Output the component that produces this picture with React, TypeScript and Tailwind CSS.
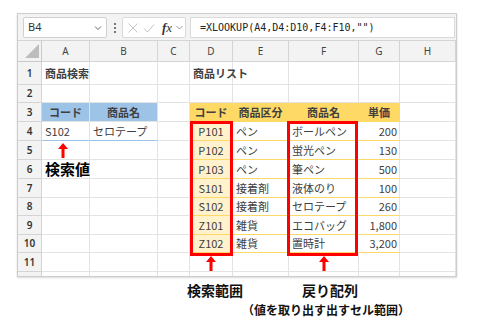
import React from 'react';

const jp = { fontFamily: '"Noto Sans CJK JP", "Noto Sans", sans-serif' };

const cols = ['A', 'B', 'C', 'D', 'E', 'F', 'G', 'H'];

const list = [
  ['P101', 'ペン', 'ボールペン', '200'],
  ['P102', 'ペン', '蛍光ペン', '130'],
  ['P103', 'ペン', '筆ペン', '500'],
  ['S101', '接着剤', '液体のり', '100'],
  ['S102', '接着剤', 'セロテープ', '260'],
  ['Z101', '雑貨', 'エコバッグ', '1,800'],
  ['Z102', '雑貨', '置時計', '3,200'],
];

function UpArrow() {
  return (
    <svg width="10" height="15" viewBox="0 0 10 15">
      <path d="M5 0 L10 6 L6.5 6 L6.5 15 L3.5 15 L3.5 6 L0 6 Z" fill="#ff0000" />
    </svg>
  );
}

type Cell = { text?: React.ReactNode; cls?: string };

function cellFor(row: number, col: number): Cell {
  // col: 0=A .. 7=H
  if (row === 1) {
    if (col === 0) return { text: '商品検索', cls: 'font-bold' };
    if (col === 3) return { text: '商品リスト', cls: 'font-bold' };
  }
  if (row === 3) {
    if (col === 0) return { text: 'コード', cls: 'bg-[#9dc3e6] border-[#9dc3e6] font-bold justify-center' };
    if (col === 1) return { text: '商品名', cls: 'bg-[#9dc3e6] border-[#9dc3e6] font-bold justify-center' };
    const h = ['コード', '商品区分', '商品名', '単価'];
    if (col >= 3 && col <= 6)
      return { text: h[col - 3], cls: 'bg-[#ffd966] border-[#ffd966] font-bold justify-center' };
  }
  if (row === 4 && col === 0) return { text: 'S102', cls: 'border-b-[#9dc3e6]' };
  if (row === 4 && col === 1) return { text: 'セロテープ', cls: 'border-b-[#9dc3e6]' };
  if (row === 5 && col === 0) return { text: <UpArrow />, cls: 'pl-[16px] items-start pt-[2px]' };
  if (row === 6 && col === 0) return { text: '検索値', cls: 'font-bold text-[15px] text-black' };
  if (row >= 4 && row <= 10 && col >= 3 && col <= 6) {
    const v = list[row - 4][col - 3];
    const base = 'border-b-[#ffd966]';
    if (col === 3) return { text: v, cls: `${base} bg-[#fff2cc] border-r-[#ffe699] justify-center` };
    if (col === 6) return { text: v, cls: `${base} justify-end pr-[2px]` };
    return { text: v, cls: `${base} border-r-white` };
  }
  if (row === 11 && (col === 3 || col === 5))
    return { text: <UpArrow />, cls: 'justify-center items-end pb-0' };
  return {};
}

function Grid() {
  const rows = Array.from({ length: 11 }, (_, i) => i + 1);
  return (
    <div className="relative grid grid-cols-[24px_48px_68px_32px_43px_56px_70px_41px_56px] grid-rows-[21px_23px_18px_19px_19px_19px_19px_19px_18px_19px_18px_19px_4px] bg-white">
      <div className="bg-[#f3f3f3] border-r border-b border-[#c9c9c9] relative">
        <div className="absolute right-[2px] bottom-[3px] w-0 h-0 border-l-[14px] border-l-transparent border-b-[14px] border-b-[#bdbdbd]" />
      </div>
      {cols.map((c) => (
        <div
          key={c}
          className="bg-[#f3f3f3] border-r border-b border-[#d4d4d4] flex items-center justify-center text-[10px] text-[#444]"
          style={{ fontFamily: '"Noto Sans", sans-serif' }}
        >
          {c}
        </div>
      ))}
      {rows.map((r) => (
        <React.Fragment key={r}>
          <div
            className="bg-[#f3f3f3] border-r border-b border-[#d4d4d4] flex items-center justify-center text-[10px] font-semibold text-[#333]"
            style={{ fontFamily: '"Noto Sans", sans-serif' }}
          >
            {r}
          </div>
          {cols.map((_, ci) => {
            const cell = cellFor(r, ci);
            return (
              <div
                key={ci}
                className={`border-r border-b border-[#e3e3e3] flex items-center px-[3px] text-[11px] text-[#404040] whitespace-nowrap overflow-visible z-0 ${cell.cls ?? ''}`}
                style={jp}
              >
                {cell.text}
              </div>
            );
          })}
        </React.Fragment>
      ))}
      <div className="bg-[#f3f3f3] border-r border-[#d4d4d4]" />
      {cols.map((c) => (
        <div key={c} className="border-r border-[#e3e3e3]" />
      ))}
      <div className="absolute left-[172px] top-[80px] w-[43px] h-[135px] border-[3px] border-[#ff0000] pointer-events-none" />
      <div className="absolute left-[269px] top-[80px] w-[71px] h-[135px] border-[3px] border-[#ff0000] pointer-events-none" />
    </div>
  );
}

function FormulaBar() {
  return (
    <div className="h-[27px] bg-[#f3f3f3] border-b border-[#d4d4d4] flex items-start pt-[3px] pl-[5px] pr-[1px] gap-[0px]">
      <div className="w-[84px] h-[21px] bg-white border border-[#cfcfcf] rounded-[2px] flex items-center justify-between px-[4px]">
        <span className="text-[11px] text-[#333]" style={{ fontFamily: '"Noto Sans", sans-serif' }}>B4</span>
        <svg width="8" height="6" viewBox="0 0 8 6">
          <path d="M1 1.5 L4 4.5 L7 1.5" stroke="#666" strokeWidth="1" fill="none" />
        </svg>
      </div>
      <div className="w-[15px] h-[21px] flex flex-col items-center justify-center gap-[2px]">
        <span className="w-[2px] h-[2px] bg-[#777]" />
        <span className="w-[2px] h-[2px] bg-[#777]" />
        <span className="w-[2px] h-[2px] bg-[#777]" />
      </div>
      <div className="w-[64px] h-[21px] bg-white border border-[#dadada] rounded-[2px] flex items-center pl-[4px] gap-[4px]">
        <svg width="12" height="12" viewBox="0 0 12 12">
          <path d="M1.5 1.5 L10.5 10.5 M10.5 1.5 L1.5 10.5" stroke="#c4c4c4" strokeWidth="1" />
        </svg>
        <svg width="12" height="12" viewBox="0 0 12 12">
          <path d="M1 6.5 L4.5 10 L11 2.5" stroke="#c4c4c4" strokeWidth="1" fill="none" />
        </svg>
        <span
          className="text-[13px] italic text-[#333] leading-none ml-[3px]"
          style={{ fontFamily: '"Liberation Serif", serif' }}
        >
          <span className="font-bold">f</span>x
        </span>
        <svg width="7" height="5" viewBox="0 0 7 5">
          <path d="M0.5 1 L3.5 4 L6.5 1" stroke="#999" strokeWidth="1" fill="none" />
        </svg>
      </div>
      <div className="ml-[4px] flex-1 h-[21px] bg-white border border-[#dadada] flex items-center pl-[9px]">
        <span className="text-[10px] text-[#222]" style={{ fontFamily: '"DejaVu Sans Mono", monospace' }}>
          =XLOOKUP(A4,D4:D10,F4:F10,"")
        </span>
      </div>
    </div>
  );
}

export default function App() {
  return (
    <div className="w-[480px] h-[323px] bg-white overflow-hidden" style={jp}>
      <div className="pt-[13px] pl-[17px]">
        <div className="w-[440px] border border-[#cccccc] shadow-[0_1px_2px_rgba(0,0,0,0.15)]">
          <FormulaBar />
          <Grid />
        </div>
      </div>
      <div className="mt-[3px] flex pl-[187px] h-[20px] items-center gap-[59px] text-[14px] font-bold text-[#111]">
        <span>検索範囲</span>
        <span>戻り配列</span>
      </div>
      <div className="flex pl-[242px] h-[19px] items-center text-[12px] font-bold text-[#111]">
        （値を取り出す出すセル範囲）
      </div>
    </div>
  );
}
